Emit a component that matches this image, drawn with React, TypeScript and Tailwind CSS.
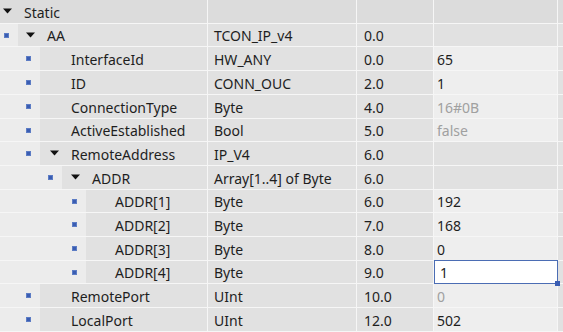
import type { ReactNode } from 'react';

type Row = {
  name: string;
  level: number;
  open?: boolean;
  type: string;
  offset: string;
  value?: string;
  dim?: boolean;
  editable?: boolean;
  selected?: boolean;
  h: string;
};

const rows: Row[] = [
  { name: 'Static', level: 0, open: true, type: '', offset: '', h: 'h-[24px]' },
  { name: 'AA', level: 1, open: true, type: 'TCON_IP_v4', offset: '0.0', h: 'h-[23px]' },
  { name: 'InterfaceId', level: 2, type: 'HW_ANY', offset: '0.0', value: '65', editable: true, h: 'h-[24px]' },
  { name: 'ID', level: 2, type: 'CONN_OUC', offset: '2.0', value: '1', editable: true, h: 'h-[24px]' },
  { name: 'ConnectionType', level: 2, type: 'Byte', offset: '4.0', value: '16#0B', dim: true, editable: true, h: 'h-[24px]' },
  { name: 'ActiveEstablished', level: 2, type: 'Bool', offset: '5.0', value: 'false', dim: true, editable: true, h: 'h-[23px]' },
  { name: 'RemoteAddress', level: 2, open: true, type: 'IP_V4', offset: '6.0', h: 'h-[24px]' },
  { name: 'ADDR', level: 3, open: true, type: 'Array[1..4] of Byte', offset: '6.0', h: 'h-[24px]' },
  { name: 'ADDR[1]', level: 4, type: 'Byte', offset: '6.0', value: '192', editable: true, h: 'h-[23px]' },
  { name: 'ADDR[2]', level: 4, type: 'Byte', offset: '7.0', value: '168', editable: true, h: 'h-[24px]' },
  { name: 'ADDR[3]', level: 4, type: 'Byte', offset: '8.0', value: '0', editable: true, h: 'h-[24px]' },
  { name: 'ADDR[4]', level: 4, type: 'Byte', offset: '9.0', value: '1', editable: true, selected: true, h: 'h-[23px]' },
  { name: 'RemotePort', level: 2, type: 'UInt', offset: '10.0', value: '0', dim: true, editable: true, h: 'h-[24px]' },
  { name: 'LocalPort', level: 2, type: 'UInt', offset: '12.0', value: '502', editable: true, h: 'h-[24px]' },
];

// indent area (lighter) holding the square, per tree level
const lead: Record<number, string> = {
  0: 'w-[0px]',
  1: 'w-[18px]',
  2: 'w-[40px]',
  3: 'w-[62px]',
  4: 'w-[86px]',
};
const squarePos: Record<number, string> = {
  1: 'pl-[4px]',
  2: 'pl-[26px]',
  3: 'pl-[48px]',
  4: 'pl-[72px]',
};
const arrowPad: Record<number, string> = {
  0: 'pl-[3px]',
  1: 'pl-[8px]',
  2: 'pl-[10px]',
  3: 'pl-[9px]',
  4: 'pl-[8px]',
};

function Arrow() {
  return (
    <svg width="10" height="6" viewBox="0 0 10 6" className="shrink-0 -mt-[1px]">
      <path d="M0 0.5 L9 0.5 L4.5 5.5 Z" fill="#111" />
    </svg>
  );
}

function Square() {
  return <div className="w-[5px] h-[5px] bg-[#3a5db2] border border-[#5c7cc4]" />;
}

function Cell({ children, className }: { children?: ReactNode; className?: string }) {
  return (
    <div className={'flex items-center pt-[2px] border-r border-[#f6f6f6] ' + (className ?? '')}>
      {children}
    </div>
  );
}

function NameCell({ row }: { row: Row }) {
  const isHeader = row.level === 0;
  return (
    <div className={'w-[208px] shrink-0 flex border-r border-[#f6f6f6] ' + (isHeader ? 'bg-[#dcdcdc]' : 'bg-[#ececec]')}>
      {row.level > 0 && (
        <div className={'shrink-0 flex items-center ' + lead[row.level] + ' ' + squarePos[row.level]}>
          <Square />
        </div>
      )}
      <div className={'flex-1 flex items-center ' + (isHeader ? '' : 'bg-[#e1e1e1] ') + arrowPad[row.level]}>
        {row.open !== undefined || row.level === 0 ? (
          <>
            <Arrow />
            <span className="pl-[11px] pt-[2px]">{row.name}</span>
          </>
        ) : (
          <span className="pl-[21px] pt-[2px]">{row.name}</span>
        )}
      </div>
    </div>
  );
}

export default function App() {
  return (
    <div
      className="w-[563px] h-[332px] overflow-hidden bg-[#e1e1e1] text-[#1e1e1e] text-[14px] leading-none"
      style={{ fontFamily: '"Noto Sans", "Open Sans", sans-serif' }}
    >
      {rows.map((row) => {
        const header = row.level === 0;
        const base = header ? 'bg-[#dcdcdc]' : 'bg-[#e1e1e1]';
        return (
          <div key={row.name} className={'flex border-b border-[#f6f6f6] ' + row.h}>
            <NameCell row={row} />
            <Cell className={'w-[149px] shrink-0 pl-[6px] ' + base}>{row.type}</Cell>
            <Cell className={'w-[77px] shrink-0 pl-[7px] ' + base}>{row.offset}</Cell>
            {row.selected ? (
              <div className="relative w-[124px] shrink-0 flex items-center pt-[2px] pl-[5px] bg-white border border-[#4b6db4] -my-px">
                {row.value}
                <div className="absolute -right-[3px] -bottom-[3px] w-[5px] h-[5px] bg-[#3a5db2]" />
              </div>
            ) : (
              <Cell
                className={
                  'w-[124px] shrink-0 pl-[3px] ' +
                  (row.editable ? 'bg-[#eeeeee] ' : base + ' ') +
                  (row.dim ? 'text-[#a0a0a0]' : '')
                }
              >
                {row.value}
              </Cell>
            )}
            <div className={'flex-1 ' + base} />
          </div>
        );
      })}
    </div>
  );
}
